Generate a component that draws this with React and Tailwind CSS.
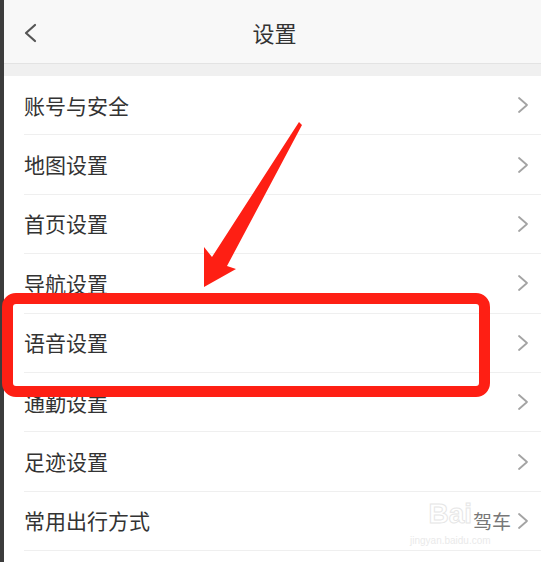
const rows = [
  { label: "账号与安全" },
  { label: "地图设置" },
  { label: "首页设置" },
  { label: "导航设置" },
  { label: "语音设置" },
  { label: "通勤设置" },
  { label: "足迹设置" },
  { label: "常用出行方式", value: "驾车" },
];

function ChevronRight() {
  return (
    <svg width="12" height="18" viewBox="0 0 12 18" fill="none">
      <path d="M2 2L10 9L2 16" stroke="#a3a3a3" strokeWidth="1.8" strokeLinecap="round" strokeLinejoin="round" />
    </svg>
  );
}

function ChevronLeft() {
  return (
    <svg width="14" height="20" viewBox="0 0 14 20" fill="none">
      <path d="M12 2L3 10L12 18" stroke="#555555" strokeWidth="2.2" strokeLinecap="round" strokeLinejoin="round" />
    </svg>
  );
}

export default function App() {
  return (
    <div
      className="relative w-[541px] h-[562px] overflow-hidden flex bg-white"
      style={{ fontFamily: '"Noto Sans CJK SC", "Noto Sans", sans-serif' }}
    >
      <div className="w-[4px] shrink-0 bg-[#3c3c3c]" />
      <div className="flex-1 flex flex-col">
        {/* header */}
        <div className="h-[64px] shrink-0 flex items-center bg-[#f8f8f8] border-b border-[#e3e3e3] pl-[19px] pt-[2px]">
          <div className="w-[14px] flex items-center">
            <ChevronLeft />
          </div>
          <div className="flex-1 text-center text-[22px] text-[#333333] pl-[4px]">设置</div>
          <div className="w-[33px]" />
        </div>
        <div className="h-[12px] shrink-0 bg-[#f0f0f0]" />

        {/* list */}
        <div className="flex flex-col">
          {rows.map((r) => (
            <div key={r.label} className="h-[59.4px] shrink-0 pl-[20px]">
              <div className="h-full flex items-center justify-between border-b border-[#efefef] pr-[12px]">
                <span className="text-[21px] text-[#333333] leading-none">{r.label}</span>
                <div className="flex items-center gap-[6px]">
                  {r.value && <span className="text-[19px] text-[#777777] leading-none">{r.value}</span>}
                  <ChevronRight />
                </div>
              </div>
            </div>
          ))}
        </div>
      </div>

      {/* watermark */}
      <div className="absolute left-[410px] top-[500px] flex flex-col items-center pointer-events-none opacity-60">
        <span
          className="text-[28px] leading-none font-bold text-transparent"
          style={{ WebkitTextStroke: "1px #d6d6d6", fontFamily: '"Liberation Sans", sans-serif' }}
        >
          Bai
        </span>
        <span className="text-[10px] text-[#dcdcdc] leading-none mt-[8px]" style={{ fontFamily: '"Liberation Sans", sans-serif' }}>
          jingyan.baidu.com
        </span>
      </div>

      {/* red highlight box */}
      <div className="absolute left-[2px] top-[293px] w-[488px] h-[104px] border-[11px] border-[#fe1f14] rounded-[14px] pointer-events-none" />

      {/* red arrow */}
      <svg className="absolute left-0 top-0 pointer-events-none" width="541" height="562" viewBox="0 0 541 562">
        <polygon
          points="299,122 302,125 227,266 236,269 204,287 204,247 212,257"
          fill="#fe1f14"
        />
      </svg>
    </div>
  );
}
